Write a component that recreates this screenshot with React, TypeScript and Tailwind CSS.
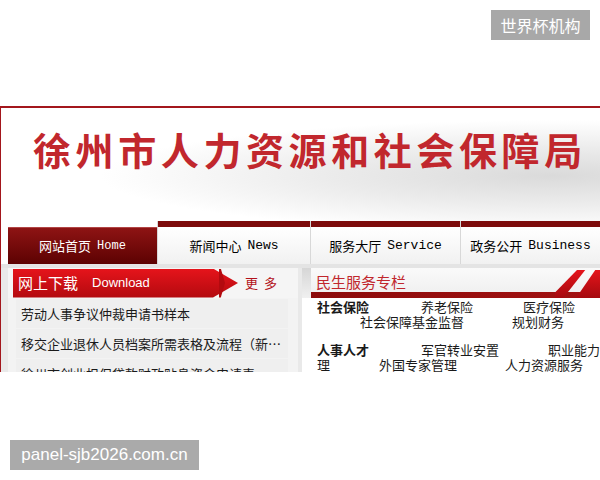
import React from "react";

const cjk = "font-['Noto_Sans_CJK_SC','Noto_Sans',sans-serif]";
const mono = "font-['Liberation_Mono','Noto_Sans_CJK_SC',monospace]";

const Tab = ({ cn, en, w }: { cn: string; en: string; w: string }) => (
  <div className={`${w} flex flex-col border-l border-[#d8d8d8] first:border-l-0`}>
    <div className="h-[6px] bg-[#7d0b0b]" />
    <div className="flex-1 flex items-center justify-center bg-[linear-gradient(#ffffff,#f1f1f1)] text-[13px] text-black">
      <span className={cjk}>{cn}</span>
      <span className={`${mono} ml-[6px]`}>{en}</span>
    </div>
  </div>
);

const App = () => {
  return (
    <div className={`relative w-[600px] h-[480px] bg-white overflow-hidden ${cjk}`}>
      <div className="absolute left-[491px] top-[10px] w-[99px] h-[30px] bg-[#a8a8a8] text-white text-[16px] flex items-center justify-center">
        世界杯机构
      </div>

      <div className="mt-[106px] h-[266px] overflow-hidden border-t-2 border-l border-[#a3161c]">
        {/* header */}
        <div className="h-[113px] bg-[radial-gradient(ellipse_at_92%_60%,#dadada_0%,#ebebeb_28%,#ffffff_58%)] pl-[32px] pt-[22px]">
          <div className="text-[38px] leading-none font-bold tracking-[4.6px] text-[#c1272d] whitespace-nowrap">
            徐州市人力资源和社会保障局
          </div>
        </div>

        {/* nav */}
        <div className="flex h-[43px] bg-white">
          <div className="w-[156px] pl-[7px] pt-[6px] flex">
            <div className="flex-1 flex items-center justify-center border-t border-[#b24545] bg-[linear-gradient(#8e1414,#5c0202)] text-[13px] text-white">
              <span>网站首页</span>
              <span className={`${mono} ml-[6px] text-[12px]`}>Home</span>
            </div>
          </div>
          <Tab cn="新闻中心" en="News" w="w-[153px]" />
          <Tab cn="服务大厅" en="Service" w="w-[150px]" />
          <Tab cn="政务公开" en="Business" w="flex-1" />
        </div>

        <div className="h-[4px] bg-[#e4e4e4]" />

        {/* content */}
        <div className="flex bg-[#e9e9e9]">
          {/* left panel */}
          <div className="w-[292px] ml-[7px] flex flex-col bg-[#f3f3f3]">
            <div className="flex items-center h-[30px] bg-[#f5f5f5]">
              <div className="relative w-[225px] h-[29px] ml-[5px] bg-[linear-gradient(#e5141b,#b30a0f)] flex items-center pl-[5px] [clip-path:polygon(0_0,200px_0,225px_50%,200px_100%,0_100%)]">
                <span className="text-[15px] text-white">网上下载</span>
                <span className="text-[13px] text-white ml-[14px] font-['Liberation_Sans',sans-serif]">Download</span>
              </div>
              <div className="w-[6px] h-[29px] -ml-[19px] bg-[#b30a0f] [clip-path:polygon(0_0,30%_0,100%_50%,30%_100%,0_100%)]" />
              <span className="ml-[20px] text-[13px] text-[#b3121a] tracking-[6px]">更多</span>
            </div>
            {[
              "劳动人事争议仲裁申请书样本",
              "移交企业退休人员档案所需表格及流程（新…",
              "徐州市创业担保贷款财政贴息资金申请表",
            ].map((t) => (
              <div key={t} className="h-[29px] ml-[8px] mr-[10px] mt-[1px] pl-[5px] bg-[#efefef] flex items-center text-[13px] text-[#1a1a1a] whitespace-nowrap overflow-hidden">
                {t}
              </div>
            ))}
          </div>

          {/* right panel */}
          <div className="flex-1 ml-[4px] bg-white">
            <div className="relative h-[30px] bg-[linear-gradient(#fafafa,#eeeeee)] flex">
              <div className="w-[9px] bg-[linear-gradient(#d6d6d6,#f0f0f0)]" />
              <div className="flex-1 flex flex-col">
                <div className="flex-1 flex items-end pl-[5px] text-[15px] text-[#c1272d] leading-[20px]">民生服务专栏</div>
                <div className="h-[6px] bg-[linear-gradient(90deg,#8c0b0b,#a31212)]" />
              </div>
              <div className="absolute right-[-10px] top-[2px] w-[55px] h-[28px] bg-[linear-gradient(#e5141b,#a50a0f)] [clip-path:polygon(40%_0,55%_0,15%_100%,0_100%,0_80%)]" />
              <div className="absolute right-[-20px] top-[2px] w-[55px] h-[28px] bg-[linear-gradient(#e5141b,#a50a0f)] [clip-path:polygon(55%_0,100%_0,100%_100%,20%_100%)]" />
            </div>
            <div className="pl-[15px] pt-[1px] text-[13px] leading-[15px] text-[#1a1a1a] whitespace-nowrap">
              <div className="flex">
                <span className="w-[104px] font-bold">社会保险</span>
                <span className="w-[102px]">养老保险</span>
                <span>医疗保险</span>
              </div>
              <div className="flex">
                <span className="ml-[43px] w-[152px]">社会保障基金监督</span>
                <span>规划财务</span>
              </div>
              <div className="h-[13px]" />
              <div className="flex">
                <span className="w-[104px] font-bold">人事人才</span>
                <span className="w-[127px]">军官转业安置</span>
                <span>职业能力</span>
              </div>
              <div className="flex">
                <span className="w-[62px]">理</span>
                <span className="w-[126px]">外国专家管理</span>
                <span>人力资源服务</span>
              </div>
            </div>
          </div>
        </div>
      </div>

      <div className="absolute left-[10px] top-[440px] w-[189px] h-[30px] bg-[#aaaaaa] text-white text-[17px] flex items-center justify-center font-['Liberation_Sans',sans-serif]">
        panel-sjb2026.com.cn
      </div>
    </div>
  );
};

export default App;
